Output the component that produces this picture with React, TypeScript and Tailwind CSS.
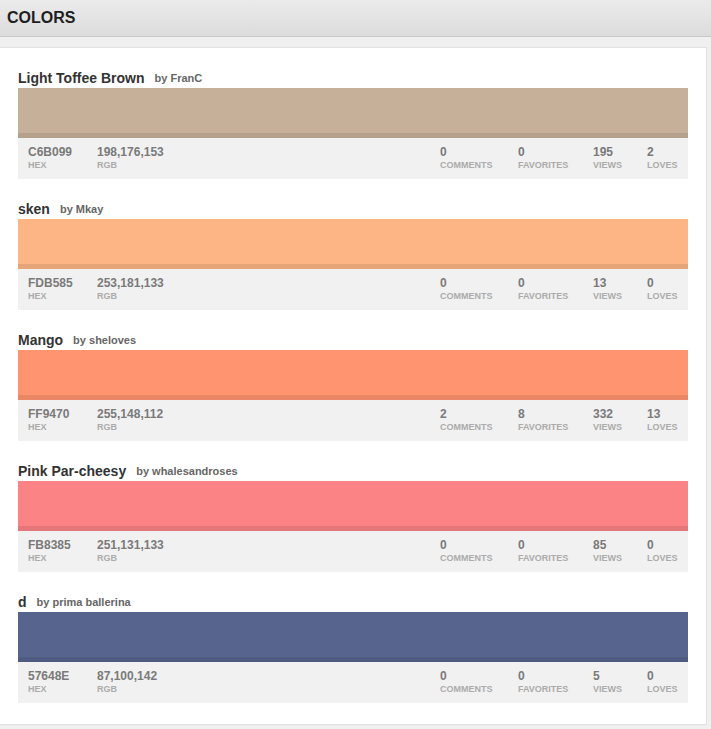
import React from "react";

const colors = [
  { name: "Light Toffee Brown", by: "FranC", hex: "C6B099", rgb: "198,176,153", comments: 0, favorites: 0, views: 195, loves: 2 },
  { name: "sken", by: "Mkay", hex: "FDB585", rgb: "253,181,133", comments: 0, favorites: 0, views: 13, loves: 0 },
  { name: "Mango", by: "sheloves", hex: "FF9470", rgb: "255,148,112", comments: 2, favorites: 8, views: 332, loves: 13 },
  { name: "Pink Par-cheesy", by: "whalesandroses", hex: "FB8385", rgb: "251,131,133", comments: 0, favorites: 0, views: 85, loves: 0 },
  { name: "d", by: "prima ballerina", hex: "57648E", rgb: "87,100,142", comments: 0, favorites: 0, views: 5, loves: 0 },
];

function Stat({ value, label, className }: { value: React.ReactNode; label: string; className: string }) {
  return (
    <div className={className}>
      <div className="text-[12px] font-bold leading-[14px] text-[#7a7a7a]">{value}</div>
      <div className="text-[9px] font-bold leading-[12px] text-[#ababab] uppercase">{label}</div>
    </div>
  );
}

export default function App() {
  return (
    <main className="min-h-[729px] bg-[#f0f0f0] font-['Liberation_Sans',Arial,sans-serif]">
      <header className="h-[37px] bg-gradient-to-b from-[#ebebeb] to-[#dcdcdc] border-b border-[#c8c8c8] flex items-center px-[7px]">
        <h1 className="text-[16px] font-bold text-[#1e1e1e]">COLORS</h1>
      </header>
      <section className="mt-[10px] w-[707px] bg-white border border-l-0 border-[#e2e2e2] pt-[20px] pb-[21px] px-[18px]">
        {colors.map((c) => (
          <div key={c.hex} className="mb-[20px] last:mb-0 w-[670px]">
            <div className="h-[20px] flex items-center gap-[10px]">
              <span className="text-[14px] font-bold text-[#333]">{c.name}</span>
              <span className="text-[11px] font-bold text-[#666]">by {c.by}</span>
            </div>
            <div className="h-[50px] flex flex-col" style={{ backgroundColor: `#${c.hex}` }}>
              <div className="flex-1" />
              <div className="h-[5px] bg-black/[0.09]" />
            </div>
            <div className="h-[41px] bg-[#f1f1f1] flex pt-[7px]">
              <Stat className="ml-[10px] w-[69px]" value={c.hex} label="Hex" />
              <Stat className="w-[343px]" value={c.rgb} label="Rgb" />
              <Stat className="w-[78px]" value={c.comments} label="Comments" />
              <Stat className="w-[75px]" value={c.favorites} label="Favorites" />
              <Stat className="w-[54px]" value={c.views} label="Views" />
              <Stat className="" value={c.loves} label="Loves" />
            </div>
          </div>
        ))}
      </section>
    </main>
  );
}
